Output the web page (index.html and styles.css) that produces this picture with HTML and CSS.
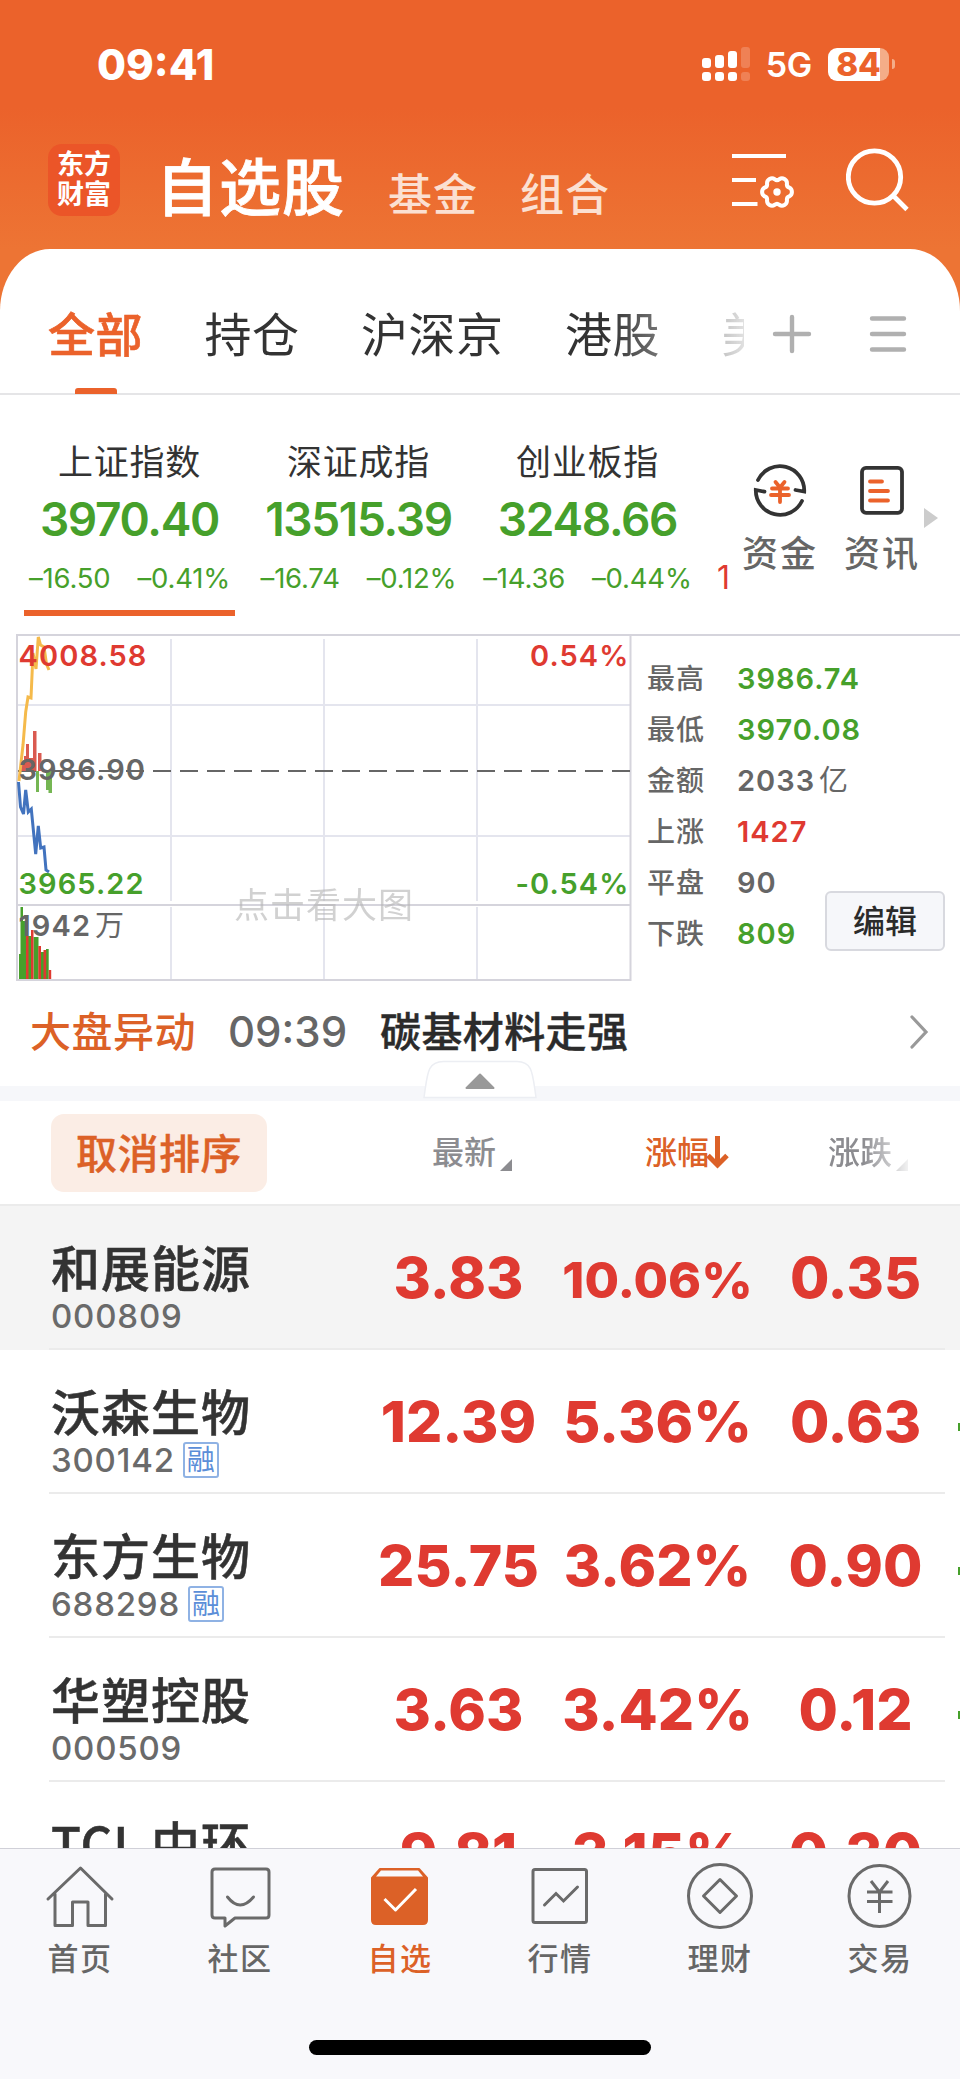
FILE: index.html
```html
<!DOCTYPE html>
<html lang="zh-CN">
<head>
  <meta charset="UTF-8">
  <meta name="viewport" content="width=device-width, initial-scale=1.0">
  <title>自选股</title>
  <link rel="stylesheet" href="styles.css">
</head>
<body>

  <header class="header">
    <div class="status">
      <div class="time">09:41</div>
      <div class="status-right">
        <svg class="signal" width="48" height="36" fill="#fff">
          <rect x="0" y="12" width="9" height="10" rx="3"/>
          <rect x="13" y="9" width="9" height="13" rx="3"/>
          <rect x="26" y="5" width="9" height="17" rx="3"/>
          <rect x="0" y="26" width="9" height="9" rx="3"/>
          <rect x="13" y="26" width="9" height="9" rx="3"/>
          <rect x="26" y="26" width="9" height="9" rx="3"/>
          <rect x="39" y="1" width="9" height="21" rx="3" opacity=".2"/>
          <rect x="39" y="26" width="9" height="9" rx="3" opacity=".2"/>
        </svg>
        <span class="net">5G</span>
        <div class="battery">84</div>
        <div class="battery-tip"></div>
      </div>
    </div>
    <div class="nav">
      <div class="logo">东方<br>财富</div>
      <div class="nav-title">自选股</div>
      <div class="nav-link">基金</div>
      <div class="nav-link">组合</div>
      <svg class="icon-set" width="64" height="62" fill="none" stroke="#fff" stroke-width="4">
        <path d="M0 8H54M0 32H24M0 56H25.500"/>
        <path transform="translate(45 44)" d="M12.200 4.450A3.500 3.500 0 0 0 9.960 8.360A5 5 0 0 1 2.260 12.800A3.500 3.500 0 0 0-2.260 12.800A5 5 0 0 1-9.960 8.360A3.500 3.500 0 0 0-12.200 4.450A5 5 0 0 1-12.200-4.450A3.500 3.500 0 0 0-9.960-8.360A5 5 0 0 1-2.260-12.800A3.500 3.500 0 0 0 2.260-12.800A5 5 0 0 1 9.960-8.360A3.500 3.500 0 0 0 12.200-4.450A5 5 0 0 1 12.200 4.450Z"/>
        <circle cx="45" cy="44" r="3.700" fill="#fff" stroke="none"/>
      </svg>
      <svg class="icon-search" width="64" height="64" fill="none" stroke="#fff" stroke-width="4.800">
        <circle cx="28.500" cy="29" r="26.200"/>
        <path d="M47.500 48L61 61.500"/>
      </svg>
    </div>
  </header>

  <main class="panel">
    <div class="tabs">
      <div class="tab-list">
        <div class="tab active">全部</div>
        <div class="tab">持仓</div>
        <div class="tab">沪深京</div>
        <div class="tab">港股</div>
        <div class="tab">美股</div>
      </div>
      <svg class="icon-plus" width="40" height="40" stroke="#b0b0b0" stroke-width="4.400" stroke-linecap="round">
        <path d="M3 20H37M20 3V37"/>
      </svg>
      <svg class="icon-menu" width="40" height="40" stroke="#b0b0b0" stroke-width="4.400" stroke-linecap="round">
        <path d="M4 4.500H36M4 20H36M4 35.500H36"/>
      </svg>
    </div>

    <div class="indexes">
      <div class="index-list">
        <div class="index active">
          <div class="index-name">上证指数</div>
          <div class="index-value">3970.40</div>
          <div class="index-diff"><span>–16.50</span><span>–0.41%</span></div>
        </div>
        <div class="index">
          <div class="index-name">深证成指</div>
          <div class="index-value">13515.39</div>
          <div class="index-diff"><span>–16.74</span><span>–0.12%</span></div>
        </div>
        <div class="index">
          <div class="index-name">创业板指</div>
          <div class="index-value">3248.66</div>
          <div class="index-diff"><span>–14.36</span><span>–0.44%</span></div>
        </div>
        <div class="index-next">1</div>
      </div>
      <div class="quick">
        <svg width="56" height="56" fill="none" stroke="#333" stroke-width="3.800" stroke-linecap="round">
          <path d="M6 18A24.300 24.300 0 0 1 52.200 29.500L43.500 28"/>
          <path d="M50 39A24.300 24.300 0 0 1 3.800 28L12.500 29.700"/>
          <path stroke="#eb622b" d="M23.500 20L28 25.500L32.500 20M20 26.500H36M19 33H37M28 26V40"/>
        </svg>
        <div class="quick-name">资金</div>
      </div>
      <div class="quick">
        <svg width="56" height="56" fill="none" stroke="#333" stroke-width="3.800" stroke-linecap="round">
          <rect x="8" y="5.800" width="40" height="45" rx="4"/>
          <path stroke="#eb622b" d="M16 19.500H28M16 29H34M16 38.500H34"/>
        </svg>
        <div class="quick-name">资讯</div>
      </div>
      <div class="quick-more"></div>
    </div>

    <div class="market">
      <svg class="chart" width="632" height="348" viewBox="0 634 632 348">
        <g stroke="#e4e5ee" stroke-width="2">
          <path d="M171 639V901M324 639V901M477 639V901M171 907V979M324 907V979M477 907V979"/>
          <path d="M18 705H630M18 836H630"/>
        </g>
        <path d="M18 905H630" stroke="#d5d4dc" stroke-width="2"/>
        <path d="M17 634V980H630.500V634" fill="none" stroke="#d5d4dc" stroke-width="2"/>
        <path d="M18 771H630" stroke="#666" stroke-width="2" stroke-dasharray="18 9"/>
        <g fill="#da5a50">
          <rect x="20" y="761" width="6" height="10"/>
          <rect x="24" y="756" width="3" height="15"/>
          <rect x="26" y="744" width="3" height="27"/>
          <rect x="29" y="758" width="4" height="13"/>
          <rect x="33" y="731" width="3.500" height="40"/>
          <rect x="38" y="753" width="3.500" height="18"/>
        </g>
        <g fill="#75b653">
          <rect x="36" y="771" width="3" height="21"/>
          <rect x="46" y="771" width="3" height="19"/>
          <rect x="48.500" y="771" width="3.500" height="22"/>
        </g>
        <path d="M19 781L23 745L25.700 712L28 697L31 698L33 653L36 669L38.300 637L40.500 645L44 647L46.500 664L49 670" fill="none" stroke="#f5ba4b" stroke-width="3"/>
        <path d="M18.500 782L20.500 807L23.500 814L25.700 790L28.300 812L31.300 809L35.700 854L38.300 826L40.700 848L44 847L46 870L49 872" fill="none" stroke="#4273be" stroke-width="3"/>
        <g fill="#46a02b">
          <rect x="19" y="954" width="2" height="25"/>
          <rect x="20.500" y="907" width="2.500" height="72"/>
          <rect x="23" y="921" width="3" height="58"/>
          <rect x="28" y="936" width="3" height="43"/>
          <rect x="33.500" y="937" width="5" height="42"/>
          <rect x="41" y="952" width="3" height="27"/>
          <rect x="46" y="949" width="2.700" height="30"/>
        </g>
        <g fill="#df3a31">
          <rect x="26" y="936" width="2.500" height="43"/>
          <rect x="31" y="930" width="2.500" height="49"/>
          <rect x="38.300" y="946" width="2.700" height="33"/>
          <rect x="43.500" y="950" width="2.700" height="29"/>
          <rect x="48.700" y="970" width="2.500" height="9"/>
        </g>
        <text class="chart-text red" x="18.500" y="666">4008.58</text>
        <text class="chart-text gray" x="18.500" y="780">3986.90</text>
        <text class="chart-text green" x="18.500" y="894">3965.22</text>
        <text class="chart-text gray" x="18.500" y="936">1942<tspan dx="4" font-weight="400">万</tspan></text>
        <text class="chart-text red" x="629.500" y="666" text-anchor="end">0.54%</text>
        <text class="chart-text green" x="629.500" y="894" text-anchor="end">-0.54%</text>
        <text class="chart-tip" x="234" y="918">点击看大图</text>
      </svg>
      <div class="stats">
        <div class="stat"><span>最高</span><b class="green">3986.74</b></div>
        <div class="stat"><span>最低</span><b class="green">3970.08</b></div>
        <div class="stat"><span>金额</span><b class="unit">2033<i>亿</i></b></div>
        <div class="stat"><span>上涨</span><b class="red">1427</b></div>
        <div class="stat"><span>平盘</span><b>90</b></div>
        <div class="stat"><span>下跌</span><b class="green">809</b></div>
        <button class="edit">编辑</button>
      </div>
    </div>

    <div class="news">
      <span class="news-type">大盘异动</span>
      <span class="news-time">09:39</span>
      <span class="news-title">碳基材料走强</span>
      <svg class="news-arrow" width="20" height="36" fill="none" stroke="#999" stroke-width="3.200" stroke-linecap="round">
        <path d="M3 3L17 18L3 33"/>
      </svg>
      <!-- 收起按钮 -->
      <svg class="fold" width="118" height="42">
        <path d="M3 39.500C6.500 16 6 3.500 22.500 3.500H96C112 3.500 111.500 16 115 39.500Z" fill="#fff" stroke="#eceef3" stroke-width="1.500"/>
        <path d="M59 16.500L72.500 30H45.500Z" fill="#999" stroke="#999" stroke-width="2" stroke-linejoin="round"/>
      </svg>
    </div>

    <div class="list-head">
      <button class="cancel">取消排序</button>
      <div class="col col-price">最新<i class="corner"></i></div>
      <div class="col col-rate">涨幅<svg width="23" height="34" fill="none" stroke="#dc6127" stroke-width="5"><path d="M11.500 1V30M2 20.500L11.500 30L21 20.500"/></svg></div>
      <div class="col col-diff">涨跌<i class="corner"></i></div>
    </div>

    <div class="list">
      <div class="row selected">
        <div class="stock">
          <div class="name">和展能源</div>
          <div class="code">000809</div>
        </div>
        <div class="num">3.83</div>
        <div class="num rate small">10.06%</div>
        <div class="num">0.35</div>
      </div>
      <div class="row">
        <div class="stock">
          <div class="name">沃森生物</div>
          <div class="code">300142<span class="tag">融</span></div>
        </div>
        <div class="num">12.39</div>
        <div class="num rate">5.36%</div>
        <div class="num">0.63</div>
        <div class="more"></div>
      </div>
      <div class="row">
        <div class="stock">
          <div class="name">东方生物</div>
          <div class="code">688298<span class="tag">融</span></div>
        </div>
        <div class="num">25.75</div>
        <div class="num rate">3.62%</div>
        <div class="num">0.90</div>
        <div class="more"></div>
      </div>
      <div class="row">
        <div class="stock">
          <div class="name">华塑控股</div>
          <div class="code">000509</div>
        </div>
        <div class="num">3.63</div>
        <div class="num rate">3.42%</div>
        <div class="num">0.12</div>
        <div class="more"></div>
      </div>
      <div class="row">
        <div class="stock">
          <div class="name"><span class="latin">TCL</span>中环</div>
        </div>
        <div class="num">9.81</div>
        <div class="num rate">3.15%</div>
        <div class="num">0.30</div>
      </div>
    </div>
  </main>

  <footer class="footer">
    <div class="menu">
      <div class="menu-item">
        <svg width="72" height="72" fill="none" stroke="#6a6a6a" stroke-width="3" stroke-linecap="round" stroke-linejoin="round">
          <path d="M4 36L36.500 5L68 36M11 31V62.500H28.500V39H44V62.500H61.500V31"/>
        </svg>
        <span>首页</span>
      </div>
      <div class="menu-item">
        <svg width="72" height="72" fill="none" stroke="#6a6a6a" stroke-width="3" stroke-linecap="round" stroke-linejoin="round">
          <path d="M11 6H62Q65 6 65 9V52Q65 55 62 55H31L21 63V55H11Q8 55 8 52V9Q8 6 11 6Z"/>
          <path d="M23.500 34Q36 50 49.500 34"/>
        </svg>
        <span>社区</span>
      </div>
      <div class="menu-item active">
        <svg width="72" height="72" fill="none" stroke-linejoin="round">
          <path d="M16 6H55L63 15V57Q63 61 59 61H12Q8 61 8 57V15Z" fill="#dc6127" stroke="#dc6127" stroke-width="2"/>
          <path d="M17 7.500H54L59 13.500H12Z" fill="#f8f8fb"/>
          <path d="M20.500 36L31.500 47L52 26" stroke="#fff" stroke-width="3"/>
        </svg>
        <span>自选</span>
      </div>
      <div class="menu-item">
        <svg width="72" height="72" fill="none" stroke="#6a6a6a" stroke-width="3" stroke-linecap="round">
          <rect x="9" y="6.500" width="53.500" height="53" rx="2"/>
          <path d="M20.500 42L32 30.500L39.500 38L53.500 24"/>
        </svg>
        <span>行情</span>
      </div>
      <div class="menu-item">
        <svg width="72" height="72" fill="none" stroke="#6a6a6a" stroke-width="3" stroke-linejoin="round">
          <circle cx="36" cy="33" r="31.500"/>
          <path d="M36 16.500L52.500 33L36 49.500L19.500 33Z"/>
        </svg>
        <span>理财</span>
      </div>
      <div class="menu-item">
        <svg width="72" height="72" fill="none" stroke="#6a6a6a" stroke-width="3">
          <circle cx="35.500" cy="33" r="30.500"/>
          <path d="M27 18L35.500 29L44 18M23 29H48.500M23 38.500H48.500M35.500 29V50"/>
        </svg>
        <span>交易</span>
      </div>
    </div>
    <div class="home-bar"></div>
  </footer>

</body>
</html>
```

FILE: styles.css
```css
* {
  box-sizing: border-box;
}
body {
  margin: 0;
  width: 960px;
  height: 2079px;
  overflow: hidden;
  font-family: Inter, "Noto Sans CJK SC", sans-serif;
  color: #333;
  background: #ed7434;
  display: flex;
  flex-direction: column;
}
svg {
  display: block;
  flex: none;
}
i {
  font-style: normal;
}
.red {
  color: #df3a31;
  fill: #df3a31;
}
.green {
  color: #46a02b;
  fill: #46a02b;
}
.gray {
  fill: #666;
}

/* 顶部 */
.header {
  height: 249px;
  flex: none;
  color: #fff;
  background: linear-gradient(#eb622b 0, #eb622b 108px, #ed7434 249px);
}
.status {
  height: 128px;
  padding: 0 65px 0 97px;
  display: flex;
  justify-content: space-between;
  align-items: center;
}
.time {
  font-size: 42px;
  font-weight: 800;
}
.status-right {
  display: flex;
  align-items: center;
}
.net {
  margin: 2px 16px 0 16px;
  font-size: 34px;
  line-height: 34px;
  font-weight: 600;
  letter-spacing: -.3px;
}
.battery {
  width: 61px;
  height: 33px;
  border-radius: 9px;
  background: linear-gradient(90deg, #fff 52px, #f4ad88 52px);
  color: #eb622b;
  font-size: 33px;
  font-weight: 800;
  line-height: 33px;
  text-align: center;
}
.battery-tip {
  width: 3px;
  height: 10px;
  margin-left: 3px;
  border-radius: 0 5px 5px 0;
  background: #f4ad88;
}
.nav {
  height: 121px;
  padding-left: 48px;
  display: flex;
  align-items: flex-start;
}
.logo {
  width: 72px;
  height: 72px;
  margin: 16px 36px 0 0;
  padding-top: 6px;
  border-radius: 14px;
  background: #eb5528;
  font-size: 27px;
  line-height: 30px;
  font-weight: 700;
  text-align: center;
}
.nav-title {
  margin-top: 26px;
  width: 232px;
  font-size: 62px;
  line-height: 70px;
  font-weight: 500;
  letter-spacing: 1px;
  -webkit-text-stroke: .8px #fff;
}
.nav-link {
  margin-top: 42px;
  width: 132px;
  font-size: 44px;
  line-height: 50px;
  font-weight: 500;
  letter-spacing: 1px;
  color: #fbe0d2;
}
.icon-set {
  margin: 20px 0 0 80px;
}
.icon-search {
  margin: 20px 0 0 50px;
}

/* 分组标签 */
.panel {
  flex: 1;
  min-height: 0;
  border-radius: 50px 50px 0 0 / 62px 62px 0 0;
  background: #fff;
}
.tabs {
  height: 146px;
  padding-left: 48px;
  display: flex;
  border-bottom: 2px solid #e5e5e7;
}
.tab-list {
  width: 696px;
  height: 146px;
  display: flex;
  gap: 61.500px;
  overflow: hidden;
  -webkit-mask-image: linear-gradient(90deg, #000 560px, rgba(0, 0, 0, .15) 696px);
  mask-image: linear-gradient(90deg, #000 560px, rgba(0, 0, 0, .15) 696px);
}
.tab {
  flex: none;
  padding-top: 56px;
  font-size: 47px;
  line-height: 60px;
  letter-spacing: .5px;
}
.tab.active {
  color: #eb622b;
  font-weight: 500;
  -webkit-text-stroke: .6px #eb622b;
}
.tab.active::after {
  content: "";
  display: block;
  width: 42px;
  height: 6px;
  margin: 23px auto 0;
  border-radius: 3px 3px 0 0;
  background: #eb622b;
}
.icon-plus {
  margin: 65px 0 0 28px;
}
.icon-menu {
  margin: 65px 0 0 56px;
}

/* 指数 */
.indexes {
  height: 239px;
  padding-left: 24px;
  display: flex;
}
.index-list {
  width: 706px;
  display: flex;
  gap: 18px;
  overflow: hidden;
}
.index {
  flex: none;
  width: 211px;
  height: 221px;
  padding-top: 45px;
  text-align: center;
}
.index.active {
  border-bottom: 6px solid #eb622b;
}
.index-name {
  font-size: 35px;
  line-height: 44px;
  letter-spacing: .8px;
}
.index-value {
  margin-top: 10px;
  font-size: 46px;
  line-height: 50px;
  font-weight: 600;
  letter-spacing: -1.300px;
  color: #46a02b;
}
.index-diff {
  margin-top: 17px;
  display: flex;
  justify-content: center;
  gap: 27px;
  font-size: 27.500px;
  line-height: 34px;
  letter-spacing: -.2px;
  white-space: nowrap;
  color: #46a02b;
}
.index-next {
  margin: 163px 0 0 6px;
  font-size: 32px;
  line-height: 40px;
  color: #df3a31;
}
.quick {
  width: 102px;
  padding-top: 67px;
  display: flex;
  flex-direction: column;
  align-items: center;
  margin-left: -1px;
  margin-right: 1px;
}
.quick-name {
  margin-top: 16px;
  font-size: 36px;
  line-height: 40px;
  letter-spacing: 2px;
  white-space: nowrap;
  color: #666;
  font-weight: 500;
}
.quick-more {
  margin: 113px 0 0 -10px;
  border-left: 14px solid #ccc;
  border-top: 10px solid transparent;
  border-bottom: 10px solid transparent;
  height: 0;
}

/* 分时图 */
.market {
  height: 347px;
  margin-left: 16px;
  display: flex;
  border-top: 2px solid #d5d4dc;
}
.chart {
  margin: -2px 0 0 -16px;
}
.chart-text {
  font-size: 29px;
  font-weight: 600;
  letter-spacing: 1.100px;
}
.chart-tip {
  font-size: 35px;
  letter-spacing: 1px;
  fill: #b4b4b4;
  opacity: .6;
}
.stats {
  position: relative;
  flex: 1;
  padding: 17px 0 0 15px;
}
.stat {
  height: 51.100px;
  display: flex;
  align-items: center;
  font-size: 28px;
  line-height: 40px;
  color: #666;
}
.stat span {
  width: 90px;
  letter-spacing: 1px;
  font-weight: 500;
}
.stat b {
  font-size: 29px;
  font-weight: 600;
  letter-spacing: 1px;
}
.unit i {
  margin-left: 4px;
  font-weight: 400;
}
.edit {
  position: absolute;
  right: 15px;
  top: 255px;
  width: 120px;
  height: 60px;
  padding: 0;
  border: 2px solid #d8d9df;
  border-radius: 6px;
  background: #f6f7fa;
  color: #2b2b2b;
  font: 500 32px/58px Inter, "Noto Sans CJK SC", sans-serif;
}

/* 异动 */
.news {
  position: relative;
  height: 120px;
  padding: 0 31px 4px 30px;
  display: flex;
  align-items: center;
  font-size: 41px;
  line-height: 60px;
  font-weight: 500;
  border-bottom: 15px solid #f6f7fa;
}
.news-type {
  width: 198px;
  color: #dc6127;
  letter-spacing: .5px;
}
.news-time {
  width: 152px;
  font-size: 42px;
  color: #666;
}
.news-title {
  flex: 1;
  color: #2b2b2b;
  letter-spacing: .4px;
  -webkit-text-stroke: .4px #2b2b2b;
}
.fold {
  position: absolute;
  left: 421px;
  top: 77px;
}

/* 表头 */
.list-head {
  height: 105px;
  padding: 13px 0 0 51px;
  display: flex;
  border-bottom: 2px solid #ebebeb;
}
.cancel {
  width: 216px;
  height: 78px;
  padding: 0;
  border: none;
  border-radius: 13px;
  background: #fbede5;
  color: #dc6127;
  font: 500 41px/80px Inter, "Noto Sans CJK SC", sans-serif;
  letter-spacing: .5px;
  -webkit-text-stroke: .4px #dc6127;
}
.col {
  display: flex;
  align-items: center;
  height: 78px;
  font-size: 32px;
  line-height: 40px;
  color: #8c8c90;
}
.corner {
  margin: 24px 0 0 4px;
  border-left: 12px solid transparent;
  border-bottom: 12px solid #8c8c90;
}
.col-price {
  margin-left: 165px;
  width: 213px;
  font-weight: 500;
}
.col-rate {
  width: 183px;
  color: #dc6127;
  font-weight: 500;
}
.col-rate svg {
  margin: -2px 0 0 -3px;
}
.col-diff {
  font-weight: 500;
  -webkit-mask-image: linear-gradient(90deg, #000 35px, rgba(0, 0, 0, .12) 80px);
  mask-image: linear-gradient(90deg, #000 35px, rgba(0, 0, 0, .12) 80px);
}

/* 股票列表 */
.list {
  height: 642px;
  overflow: hidden;
}
.row {
  position: relative;
  height: 144px;
  padding-left: 51px;
  display: grid;
  grid-template-columns: 308px 199px 199px 197px;
}
.row::after {
  content: "";
  position: absolute;
  left: 49px;
  right: 15px;
  bottom: 0;
  height: 2px;
  background: #ebebeb;
}
.row.selected {
  background: #f4f4f4;
}
.stock {
  padding-top: 34px;
}
.name {
  font-size: 49px;
  line-height: 60px;
  font-weight: 500;
  letter-spacing: 1px;
  -webkit-text-stroke: .5px #333;
}
.latin {
  display: inline-block;
  width: 100px;
  font-family: "Noto Sans CJK SC", sans-serif;
  line-height: 50px;
}
.code {
  margin-top: -4px;
  height: 40px;
  display: flex;
  align-items: center;
  font-size: 33px;
  font-weight: 500;
  letter-spacing: .8px;
  color: #6a6a6a;
}
.tag {
  width: 36px;
  height: 36px;
  margin-left: 8px;
  border: 2px solid #8fb2e4;
  border-radius: 3px;
  color: #5b8ed8;
  font-size: 28px;
  line-height: 33px;
  font-weight: 400;
  text-align: center;
  letter-spacing: 0;
}
.num {
  padding-top: 36px;
  font-size: 57px;
  line-height: 72px;
  font-weight: 800;
  text-align: center;
  color: #df3a31;
}
.num.small {
  font-size: 50px;
  padding-top: 38px;
}
.more {
  position: absolute;
  right: 0;
  top: 73px;
  width: 2px;
  height: 8px;
  background: #46a02b;
}

/* 底部菜单 */
.footer {
  flex: none;
  height: 231px;
  border-top: 1px solid #d0d0d8;
  background: #f8f8fb;
}
.menu {
  height: 191px;
  display: grid;
  grid-template-columns: repeat(6, 160px);
}
.menu-item {
  padding-top: 14px;
  display: flex;
  flex-direction: column;
  align-items: center;
  font-size: 31px;
  line-height: 40px;
  font-weight: 500;
  letter-spacing: 1.500px;
  color: #666;
}
.menu-item span {
  margin-top: 4px;
}
.menu-item.active {
  color: #dc6127;
}
.home-bar {
  width: 342px;
  height: 15px;
  margin: 0 auto;
  border-radius: 8px;
  background: #000;
}
```
